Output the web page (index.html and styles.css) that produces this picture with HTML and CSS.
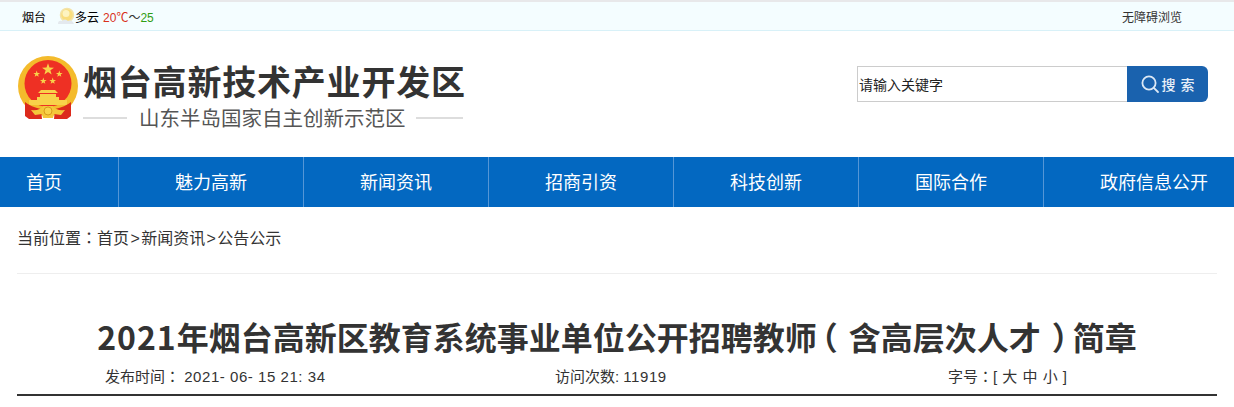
FILE: index.html
```html
<!DOCTYPE html>
<html lang="zh-CN">
<head>
    <meta charset="UTF-8">
    <title>2021年烟台高新区教育系统事业单位公开招聘教师（含高层次人才）简章</title>
    <link rel="stylesheet" href="styles.css">
</head>
<body>
    <div class="topbar">
        <div class="wrap topbar-inner">
            <div class="weather">
                <span class="city">烟台</span>
                <svg class="weather-icon" width="18" height="18" viewBox="0 0 18 18">
                    <circle cx="10" cy="8" r="6.5" fill="#f9dd7c" stroke="#f3e3a8" stroke-width="1.5"/>
                    <circle cx="9" cy="6.5" r="3.5" fill="#fdf3c0"/>
                    <path d="M1 17 Q1 13 5 14 Q8 11 11 14 Q15 12 17 17 Z" fill="#e4e9ee"/>
                </svg>
                <span class="sky">多云</span>
                <span class="temp"><span class="temp-low">20℃</span>～<span class="temp-high">25</span></span>
            </div>
            <a class="access" href="#">无障碍浏览</a>
        </div>
    </div>

    <div class="wrap header">
        <div class="logo">
            <svg class="emblem" width="64" height="66" viewBox="0 0 64 66">
                <defs>
                    <polygon id="star" points="0,-5 1.2,-1.6 4.8,-1.5 1.9,0.6 2.9,4 0,2 -2.9,4 -1.9,0.6 -4.8,-1.5 -1.2,-1.6"/>
                </defs>
                <circle cx="31" cy="30" r="30" fill="#f4bb2c"/>
                <circle cx="31" cy="27.5" r="23.5" fill="#ee3024"/>
                <g fill="#f8d24a">
                    <use href="#star" transform="translate(31 13.5) scale(1.25)"/>
                    <use href="#star" transform="translate(19.7 18) scale(.7)"/>
                    <use href="#star" transform="translate(42.3 18) scale(.7)"/>
                    <use href="#star" transform="translate(26.3 25) scale(.7)"/>
                    <use href="#star" transform="translate(35.7 25) scale(.7)"/>
                    <path d="M24 34 H38 L41 37 H21 Z M23 38 H39 V41 H23 Z M20 41 H42 V44 H20 Z M12 44 H50 V49 H12 Z"/>
                </g>
                <path d="M8 46 Q14 51 24 53 L25 63 H12 L8 60 Z" fill="#dc2a1c"/>
                <path d="M54 46 Q48 51 38 53 L37 63 H50 L54 60 Z" fill="#dc2a1c"/>
                <path d="M14 54 Q23 55 26 50 H36 Q39 55 48 54 L44 59 L37 58 L36 62 H26 L25 58 L18 59 Z" fill="#f4c63a"/>
                <circle cx="31" cy="55" r="4" fill="#f8d24a" stroke="#d99a1c"/>
            </svg>
            <div class="logo-text">
                <div class="site-name">烟台高新技术产业开发区</div>
                <div class="site-slogan">山东半岛国家自主创新示范区</div>
            </div>
        </div>
        <form class="search">
            <input class="search-input" type="text" value="请输入关键字">
            <button class="search-btn" type="button">
                <svg width="20" height="20" viewBox="0 0 20 20" fill="none" stroke="#dce8f5" stroke-width="1.8">
                    <circle cx="9" cy="9" r="6.6"/>
                    <path d="M13.8 13.8 L18 18" stroke-linecap="round"/>
                </svg>
                <span class="search-label">搜 索</span>
            </button>
        </form>
    </div>

    <ul class="nav">
        <li class="nav-first"><a href="#">首页</a></li>
        <li><a href="#">魅力高新</a></li>
        <li><a href="#">新闻资讯</a></li>
        <li><a href="#">招商引资</a></li>
        <li><a href="#">科技创新</a></li>
        <li><a href="#">国际合作</a></li>
        <li class="nav-last"><a href="#">政府信息公开</a></li>
    </ul>

    <div class="wrap">
        <div class="crumb">当前位置<span class="mid">：</span><a href="#">首页</a><span class="sep">&gt;</span><a href="#">新闻资讯</a><span class="sep">&gt;</span><a href="#">公告公示</a></div>

        <div class="article-head">
            <h1><span class="title-num">2021</span>年烟台高新区教育系统事业单位公开招聘教师<span class="paren-open">（</span>含高层次人才<span class="paren-close">）</span>简章</h1>
            <div class="meta">
                <span class="meta-time">发布时间<span class="mid">：</span> <span class="meta-num">2021- 06- 15 21: 34</span></span>
                <span class="meta-views">访问次数: <span class="meta-num">11919</span></span>
                <span class="meta-size">字号<span class="mid">：</span>[ 大 中 小 ]</span>
            </div>
        </div>
    </div>
</body>
</html>
```

FILE: styles.css
```css
* {
    box-sizing: border-box;
}
body {
    margin: 0;
    font-family: "Liberation Sans", "Noto Sans CJK SC", sans-serif;
    color: #333;
    background: #fff;
}
a {
    color: inherit;
    text-decoration: none;
}
.wrap {
    width: 1200px;
    margin: 0 auto;
}
/* TC glyphs keep colons centred in their cell */
.mid {
    font-family: "Liberation Sans", "Noto Sans CJK TC", sans-serif;
    font-feature-settings: "locl" 0;
}

/* top bar */
.topbar {
    height: 31px;
    background: #f4fdff;
    border-top: 2px solid #e8e8ea;
    border-bottom: 1px solid #d8f1f8;
}
.topbar-inner {
    display: flex;
    justify-content: space-between;
    align-items: center;
    height: 28px;
    font-size: 12px;
}
.weather {
    display: flex;
    align-items: center;
    padding-left: 5px;
    white-space: nowrap;
    color: #000;
}
.weather-icon {
    flex: none;
    margin-left: 11px;
}
.sky {
    margin-right: 4px;
}
.temp {
    color: #333;
}
.temp-low {
    color: #d9301c;
}
.temp-high {
    color: #2f9e14;
}
.access {
    margin-right: 35px;
}

/* logo and search */
.header {
    display: flex;
    justify-content: space-between;
    align-items: flex-start;
    height: 126px;
}
.logo {
    display: flex;
    margin-top: 25px;
}
.emblem {
    flex: none;
}
.logo-text {
    margin-left: 2px;
}
.site-name {
    font-size: 34px;
    line-height: 48px;
    margin-top: 3px;
    font-weight: 700;
    letter-spacing: .8px;
    white-space: nowrap;
    color: #333;
}
.site-slogan {
    display: flex;
    align-items: center;
    font-size: 20.5px;
    line-height: 24px;
    color: #555;
    white-space: nowrap;
}
.site-slogan::before, .site-slogan::after {
    content: "";
    height: 2px;
    margin-top: -3px;
    background: #ddd;
}
.site-slogan::before {
    width: 44px;
    margin-right: 12px;
}
.site-slogan::after {
    width: 47px;
    margin-left: 10px;
}
.search {
    display: flex;
    margin: 35px 9px 0 0;
}
.search-input {
    width: 270px;
    height: 36px;
    padding: 0 1px;
    border: 1px solid #ccc;
    border-right: 0;
    outline: none;
    font-size: 14px;
    color: #222;
    font-family: "Liberation Sans", "Noto Sans CJK SC", sans-serif;
}
.search-btn {
    display: flex;
    align-items: center;
    justify-content: center;
    gap: 1px;
    width: 81px;
    height: 36px;
    padding: 0;
    border: 0;
    border-radius: 0 6px 6px 0;
    background: #1a62ae;
    color: #e8f0f8;
    font-size: 14px;
    font-weight: 500;
    font-family: "Noto Sans CJK SC", sans-serif;
}
.search-label {
    word-spacing: 2px;
}

/* nav */
.nav {
    display: flex;
    height: 50px;
    margin: 0;
    padding: 0;
    list-style: none;
    background: #0368c1;
    overflow: hidden;
}
.nav li {
    flex: none;
    width: 185px;
    border-right: 1px solid #5596d6;
    text-align: center;
    font-size: 18px;
    line-height: 48px;
    color: #fff;
    font-family: "Noto Sans CJK SC", sans-serif;
    white-space: nowrap;
}
.nav .nav-first {
    width: 119px;
    padding-right: 30px;
}
.nav .nav-last {
    flex: 1;
    border-right: 0;
    text-align: left;
    padding-left: 56px;
}

/* breadcrumb */
.crumb {
    height: 67px;
    line-height: 63px;
    font-size: 16px;
    color: #333;
    border-bottom: 1px solid #eee;
}
.sep {
    margin: 0 1.4px;
}

/* article head */
.article-head {
    border-bottom: 2px solid #333;
}
h1 {
    margin: 0;
    padding-top: 38px;
    font-size: 32px;
    line-height: 48px;
    font-weight: 700;
    text-align: center;
    color: #333;
    white-space: nowrap;
    font-family: "Noto Sans CJK SC", sans-serif;
}
/* half-width bracket glyphs, spaced back out to a full cell */
.paren-open, .paren-close {
    font-feature-settings: "halt" 1;
}
.paren-open {
    margin: 0 11px 0 5px;
}
.paren-close {
    margin: 0 5px 0 11px;
}
.title-num {
    letter-spacing: 1px;
}
.meta {
    display: flex;
    height: 34px;
    padding-bottom: 4px;
    align-items: center;
    font-size: 15px;
    color: #333;
    white-space: nowrap;
}
.meta-num {
    letter-spacing: .55px;
}
.meta-time {
    margin-left: 88px;
    width: 450px;
}
.meta-views {
    width: 393px;
}
.meta-size {
    word-spacing: 1px;
}
```
